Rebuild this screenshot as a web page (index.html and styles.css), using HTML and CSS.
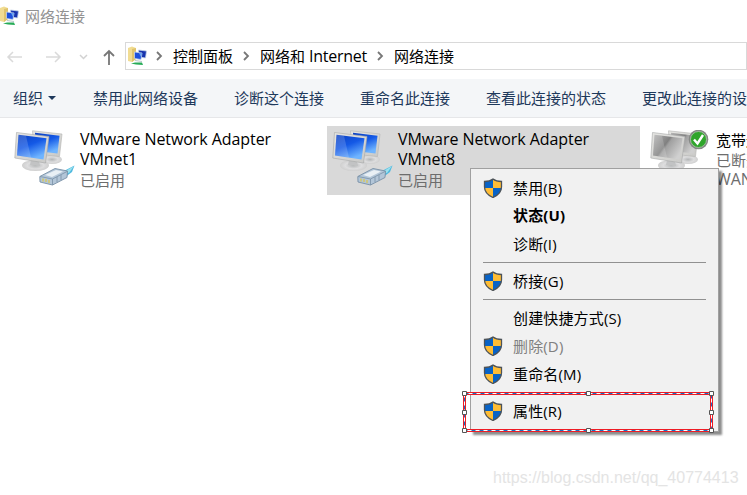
FILE: index.html
```html
<!DOCTYPE html>
<html lang="zh-CN">
<head>
<meta charset="utf-8">
<title>网络连接</title>
<link rel="stylesheet" href="styles.css">
</head>
<body>
<svg class="defs" aria-hidden="true">
  <defs>
    <linearGradient id="blue" x1="0" y1="0" x2=".5" y2="1"><stop offset="0" stop-color="#0b3fc0"/><stop offset=".5" stop-color="#1459e6"/><stop offset="1" stop-color="#6fb4ff"/></linearGradient>
    <linearGradient id="grey" x1="0" y1="0" x2="1" y2=".6"><stop offset="0" stop-color="#b4b4b4"/><stop offset=".48" stop-color="#808080"/><stop offset=".55" stop-color="#a0a0a0"/><stop offset="1" stop-color="#d0d0d0"/></linearGradient>
    <linearGradient id="frame" x1="0" y1="0" x2="1" y2="1"><stop offset="0" stop-color="#e6e6e3"/><stop offset="1" stop-color="#c9c9c7"/></linearGradient>
    <radialGradient id="base"><stop offset="0" stop-color="#b4b6b7"/><stop offset=".6" stop-color="#dededf"/><stop offset="1" stop-color="#cfcfcf"/></radialGradient>
    <symbol id="shield" viewBox="0 0 20 20">
      <path d="M10 1C7.500 3 4.500 3.500 1.500 3.500V9c0 5 4 8.500 8.500 10.500C14.500 17.500 18.500 14 18.500 9V3.500C15.500 3.500 12.500 3 10 1Z" fill="#ffbd35"/>
      <path d="M10 1C7.500 3 4.500 3.500 1.500 3.500V10H10ZM10 10V19.500C14.500 17.500 18 14.500 18.500 10Z" fill="#0963c6"/>
      <path d="M10 1C7.500 3 4.500 3.500 1.500 3.500V9c0 5 4 8.500 8.500 10.500C14.500 17.500 18.500 14 18.500 9V3.500C15.500 3.500 12.500 3 10 1Z" fill="none" stroke="#4d5358" stroke-width="1.300"/>
    </symbol>
    <symbol id="screens" viewBox="0 0 62 60">
      <ellipse cx="38" cy="29.500" rx="10" ry="4.500" fill="url(#base)"/>
      <path d="M18.500.8 48 4 45.500 26.500 20 24Z" fill="url(#frame)" stroke="#b4b4b2" stroke-width=".6"/>
      <path d="M21 2.800 45.500 5.800 43.500 23.500 22 21Z" fill="var(--screen)"/>
      <ellipse cx="21.500" cy="35.500" rx="13.500" ry="5.500" fill="url(#base)"/>
      <path d="M17 30 25 31 26 36 16 35Z" fill="#c2c3c4"/>
      <path d="M2.500 2.500 35 6.500 31.500 33 .8 28Z" fill="url(#frame)" stroke="#a6a7a7" stroke-width=".6"/>
      <path d="M4.500 4.800 32.500 8.200 29.500 29.500 3 25.500Z" fill="var(--screen)"/>
      <path d="M4.500 4.800 12 5.700 17 27.600 3 25.500Z" fill="#fff" opacity=".17"/>
    </symbol>
    <symbol id="plug" viewBox="0 0 62 60">
      <path d="M46 43 60.500 35.500 58 42 50 48Z" fill="#50b9df"/>
      <path d="M50 42 60 36 55 43Z" fill="#9be1ee"/>
      <path d="M25.800 46.500 41 38.500 53.500 41 53 47.500 38.500 55 26 52Z" fill="#b3c6d8" stroke="#7890a6" stroke-width=".9"/>
      <path d="M31 45 42 40 49 41.500 38 47Z" fill="#e9f0f5"/>
      <path d="M26 46.500 38.500 49 53 41.500M38.500 49V55M43 47 43 52M47 45V50" fill="none" stroke="#7890a6" stroke-width=".8"/>
      <path d="M29 48.500v3M32 49v3M35 50v3" stroke="#d3c66f" stroke-width="1.600"/>
    </symbol>
    <symbol id="mini" viewBox="0 0 20 20">
      <path d="M0 2 4 .5 8 2V13L4 16 0 15Z" fill="#f1dc92"/>
      <path d="M4 3 8 2V13L4 16Z" fill="#dfc36c"/>
      <path d="M10.500 4 18.500 5 17.500 12 11 11Z" fill="#1734ae" stroke="#c3d2e6" stroke-width=".8"/>
      <path d="M6.500 6 14 7 13 13.500 6.500 12.500Z" fill="#1c50dc" stroke="#c4d4ea" stroke-width=".8"/>
      <path d="M11 7 14 7.200 13 11Z" fill="#6da8f2"/>
      <path d="M7 14.500 14 15.500" stroke="#b9c8cc"/>
      <path d="M3 17.500 7 16.500 14 16.500 15 19 8 18.500Z" fill="#28ac58"/>
    </symbol>
  </defs>
</svg>
<div class="window">
  <header class="title"><svg class="mini"><use href="#mini"/></svg><span>网络连接</span></header>
  <nav class="nav">
    <svg class="arrows" viewBox="0 0 125 28" fill="none">
      <path d="M22 15H8M13 10 8 15 13 20M46 15H60M55 10 60 15 55 20" stroke="#dadada" stroke-width="1.500"/>
      <path d="M80 13 83.500 16.500 87 13" stroke="#d2d2d2" stroke-width="1.500"/>
      <path d="M109 23V9M104 14 109 9 114 14" stroke="#777" stroke-width="1.800"/>
    </svg>
    <div class="address">
      <svg class="mini"><use href="#mini"/></svg>
      <svg class="chev" viewBox="0 0 6 8"><path d="M1 0 5 4 1 8"/></svg><span class="c1">控制面板</span>
      <svg class="chev" viewBox="0 0 6 8"><path d="M1 0 5 4 1 8"/></svg><span class="c2">网络和 <span class="en">Internet</span></span>
      <svg class="chev" viewBox="0 0 6 8"><path d="M1 0 5 4 1 8"/></svg><span>网络连接</span>
    </div>
  </nav>
  <div class="toolbar">
    <span class="organize">组织<i></i></span><span>禁用此网络设备</span><span>诊断这个连接</span><span>重命名此连接</span><span>查看此连接的状态</span><span>更改此连接的设置</span>
  </div>
  <main class="items">
    <article class="item">
      <svg class="pc"><use href="#screens"/><use href="#plug"/></svg>
      <div><p class="en">VMware Network Adapter</p><p class="en">VMnet1</p><p class="sub">已启用</p></div>
    </article>
    <article class="item selected">
      <svg class="pc"><use href="#screens"/><use href="#plug"/></svg>
      <div><p class="en">VMware Network Adapter</p><p class="en">VMnet8</p><p class="sub">已启用</p></div>
    </article>
    <article class="item offline">
      <svg class="pc"><use href="#screens"/><circle cx="48.500" cy="9.500" r="9.800" fill="#858885"/><circle cx="48.500" cy="9.500" r="8" fill="#2fa52b" stroke="#b9cdb8" stroke-width=".7"/><path d="M44 9.500 47.500 13.500 53 5" fill="none" stroke="#fff" stroke-width="2.400"/></svg>
      <div><p>宽带连接</p><p class="sub">已断开连接</p><p class="sub en">WAN Miniport</p></div>
    </article>
  </main>
</div>
<div class="menu">
  <div class="row"><svg><use href="#shield"/></svg><span>禁用(B)</span></div>
  <div class="row strong"><span>状态(U)</span></div>
  <div class="row"><span>诊断(I)</span></div>
  <hr>
  <div class="row"><svg><use href="#shield"/></svg><span>桥接(G)</span></div>
  <hr>
  <div class="row"><span>创建快捷方式(S)</span></div>
  <div class="row disabled"><svg><use href="#shield"/></svg><span>删除(D)</span></div>
  <div class="row"><svg><use href="#shield"/></svg><span>重命名(M)</span></div>
  <hr class="hidden">
  <div class="row"><svg><use href="#shield"/></svg><span>属性(R)</span></div>
</div>
<svg class="marker" viewBox="0 0 254 44" fill="none">
  <rect x="3.500" y="3.500" width="247" height="37" stroke="#ee1c25" stroke-width="3"/>
  <rect x="3.500" y="3.500" width="247" height="37" stroke="#fff"/>
  <rect x="3.500" y="3.500" width="247" height="37" stroke="#1670c4" stroke-dasharray="4 4"/>
  <g fill="#fff" stroke="#555"><path d="M1.500 1.500h4v4h-4zM125.500 1.500h4v4h-4zM248.500 1.500h4v4h-4zM1.500 20.500h4v4h-4zM248.500 20.500h4v4h-4zM1.500 38.500h4v4h-4zM125.500 38.500h4v4h-4zM248.500 38.500h4v4h-4z"/></g>
</svg>
<div class="watermark">https://blog.csdn.net/qq_40774413</div>
</body>
</html>
```
FILE: styles.css
```css
* { box-sizing: border-box; }
body { margin: 0; width: 747px; height: 495px; overflow: hidden; background: #fff; color: #000; font: 15px/20px "Open Sans", "Noto Sans CJK SC", sans-serif; }
p { margin: 0; }
svg { display: block; flex: none; }
.defs { position: absolute; width: 0; height: 0; }
.window { width: 747px; height: 495px; overflow: hidden; white-space: nowrap; }
.title { display: flex; align-items: center; gap: 5px; height: 42px; padding-bottom: 11px; color: #929292; }
.mini { width: 20px; height: 20px; }
.nav { display: flex; height: 37px; }
.arrows { width: 125px; height: 28px; }
.address { display: flex; align-items: center; width: 640px; height: 28px; border: 1px solid #d9d9d9; padding-left: 2px; }
.address .mini { margin-right: 8px; }
.address > span { margin-top: -1px; }
.chev { width: 6px; height: 8px; margin-right: 11px; fill: none; stroke: #777; stroke-width: 1.8; overflow: visible; }
.c1 { margin-right: 10px; }
.c2 { width: 107px; margin-right: 10px; }
.en { font-size: 16px; letter-spacing: -.07px; }
.c2 .en { letter-spacing: -.25px; }
.toolbar { display: flex; align-items: center; gap: 36px; height: 39px; padding-left: 13px; background: #f4f6f8; border-bottom: 1px solid #e6e7e9; color: #1e395b; }
.organize { display: flex; align-items: center; }
.organize i { border: 4px solid transparent; border-top: 4px solid #1e395b; border-bottom: 0; margin: 0 1px 0 5px; }
.items { display: grid; grid-template-columns: 313px 313px 313px; gap: 5px; margin: 8px 0 0 9px; }
.item { --screen: url(#blue); display: flex; height: 69px; padding: 4px 0 0 5px; }
.item > div { margin: 0 0 0 4px; }
.pc { width: 62px; height: 60px; }
.item.selected { background: #d9d9d9; }
.item.offline { --screen: url(#grey); }
.item p.en { margin-top: -1px; margin-bottom: 1px; }
.sub { color: #6d6d6d; }
.menu { position: absolute; left: 470px; top: 168px; width: 249px; height: 264px; padding: 5px 12px; border: 1px solid #a0a0a0; background: #f1f1f1; box-shadow: 3px 3px 2px rgba(0,0,0,.45); }
.row { display: flex; align-items: center; height: 28px; }
.row svg { width: 20px; height: 20px; margin-right: -20px; }
.row span { margin-left: 30px; letter-spacing: .15px; }
.strong { font-weight: 700; padding-bottom: 2px; }
.disabled { color: #808080; }
hr { height: 1px; margin: 4px 0; border: 0; background: #919191; }
.hidden { background: none; }
.marker { position: absolute; left: 461px; top: 390px; width: 254px; height: 44px; }
.watermark { position: absolute; left: 493px; top: 468px; font: 16px/20px "Liberation Sans", sans-serif; color: #e4e4e4; white-space: nowrap; }
```
